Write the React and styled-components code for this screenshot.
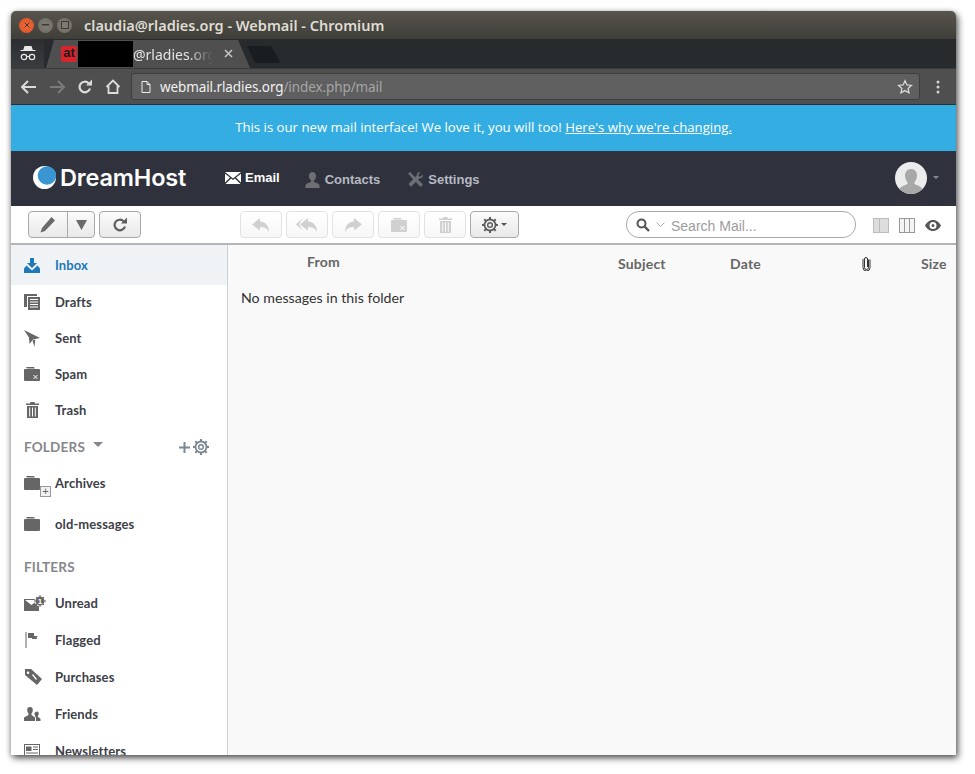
import styled, { createGlobalStyle } from 'styled-components'

const GlobalStyle = createGlobalStyle`
  html, body {
    margin: 0;
    padding: 0;
    background: #fff;
  }
  body {
    height: 774px;
    overflow: hidden;
    font-family: "Lato", "Liberation Sans", sans-serif;
  }
`

const Page = styled.div`
  padding: 11px 0 0 11px;
  height: 763px;
  box-sizing: border-box;
`
const Window = styled.div`
  width: 945px;
  height: 744px;
  display: flex;
  flex-direction: column;
  overflow: hidden;
  border-radius: 5px 5px 0 0;
  box-shadow: 2px 3px 7px rgba(0, 0, 0, 0.65), -1px 1px 5px rgba(0, 0, 0, 0.2);
  background: #fff;
`
const TitleBar = styled.div`
  height: 28px;
  flex: none;
  display: flex;
  align-items: center;
  padding-left: 8px;
  background: linear-gradient(#57554d, #3f3e39);
`
const Light = styled.span`
  width: 15px;
  height: 15px;
  border-radius: 50%;
  margin-right: 4px;
  flex: none;
  display: flex;
  align-items: center;
  justify-content: center;
  background: ${(p) => (p.$close ? 'radial-gradient(#ee6a3a, #dc4f24)' : 'radial-gradient(#807e75, #6c6a62)')};
  color: #3b3a35;
`
const WindowTitle = styled.div`
  margin-left: 8px;
  font-family: "Noto Sans", sans-serif;
  font-weight: 600;
  font-size: 14.5px;
  letter-spacing: 0;
  color: #dedcd3;
  white-space: nowrap;
`
const TabRow = styled.div`
  height: 29px;
  flex: none;
  display: flex;
  align-items: flex-end;
  background: #272b2e;
`
const Incognito = styled.div`
  width: 33px;
  height: 29px;
  flex: none;
  display: flex;
  align-items: center;
  justify-content: center;
  background: linear-gradient(#2b2f32, #3a3c3e);
`
const Tab = styled.div`
  width: 204px;
  height: 28px;
  margin-left: 2px;
  flex: none;
  display: flex;
  align-items: center;
  padding-left: 15px;
  box-sizing: border-box;
  background: #4f4f4f;
  clip-path: polygon(0 100%, 8px 0, 192px 0, 204px 100%);
`
const Favicon = styled.span`
  width: 16px;
  height: 16px;
  flex: none;
  border-radius: 2px;
  background: #d8242c;
  color: #1b1b1b;
  font: bold 13px/14px "Liberation Sans", sans-serif;
  text-align: center;
`
const Redacted = styled.span`
  width: 55px;
  height: 26px;
  margin-left: 1px;
  flex: none;
  background: #000;
`
const TabText = styled.span`
  width: 82px;
  flex: none;
  font-family: "Noto Sans", sans-serif;
  font-size: 14px;
  color: #e4e4e4;
  white-space: nowrap;
  overflow: hidden;
  -webkit-mask-image: linear-gradient(90deg, #000 68%, rgba(0, 0, 0, 0.35) 86%, transparent 98%);
  mask-image: linear-gradient(90deg, #000 68%, rgba(0, 0, 0, 0.35) 86%, transparent 98%);
`
const TabClose = styled.span`
  margin-left: 9px;
  margin-top: -1px;
  display: flex;
  color: #c6c6c6;
`
const NewTab = styled.span`
  width: 34px;
  height: 17px;
  margin: 0 0 5px -3px;
  flex: none;
  background: #1a1d1f;
  clip-path: polygon(0 0, 24px 0, 34px 100%, 8px 100%);
`
const AddressRow = styled.div`
  height: 37px;
  flex: none;
  display: flex;
  align-items: center;
  box-sizing: border-box;
  padding: 0 0 0 4px;
  background: #4f4f4f;
  border-top: 1px solid #3b3b3b;
  border-bottom: 1px solid #2f2f2f;
`
const NavIcon = styled.span`
  width: 28px;
  flex: none;
  display: flex;
  justify-content: center;
  color: ${(p) => (p.$off ? '#7b7b7b' : '#dcdcdc')};
`
const Omnibox = styled.div`
  width: 789px;
  height: 27px;
  margin-left: 4px;
  box-sizing: border-box;
  flex: none;
  display: flex;
  align-items: center;
  padding: 0 6px 0 9px;
  background: #5f5f5f;
  border: 1px solid #3e3e3e;
  border-radius: 3px;
`
const Url = styled.span`
  margin-left: 9px;
  font-family: "Noto Sans", sans-serif;
  font-size: 13.5px;
  letter-spacing: -0.1px;
  color: #a5a5a5;
  flex: 1;
  white-space: nowrap;
`
const UrlHost = styled.span`
  color: #f0f0f0;
`
const Dots = styled.span`
  margin-left: 16px;
  display: flex;
  color: #d4d4d4;
`
const Banner = styled.div`
  height: 46px;
  flex: none;
  display: flex;
  align-items: center;
  justify-content: center;
  box-sizing: border-box;
  padding-bottom: 2px;
  background: #34ade3;
  color: #fff;
  font-family: "Open Sans", sans-serif;
  font-size: 13.2px;
  white-space: pre;
  a {
    color: #fff;
    text-decoration: underline;
  }
`
const TopNav = styled.div`
  height: 55px;
  flex: none;
  display: flex;
  align-items: center;
  box-sizing: border-box;
  padding: 0 17px 2px 22px;
  background: #2f323c;
`
const Logo = styled.div`
  width: 192px;
  flex: none;
  display: flex;
  align-items: center;
  gap: 4px;
  font-family: "Inter", sans-serif;
  font-weight: 600;
  font-size: 23.5px;
  letter-spacing: -0.15px;
  color: #fff;
`
const NavLink = styled.a`
  display: flex;
  align-items: center;
  gap: ${(p) => p.$iconGap || 5}px;
  margin-right: ${(p) => p.$gap}px;
  font: bold 13px "Liberation Sans", sans-serif;
  color: ${(p) => (p.$active ? '#fff' : '#b6bac3')};
  padding-top: ${(p) => (p.$active ? 0 : 4)}px;
`
const SettingsGlyph = styled.span`
  display: flex;
  color: #6d6f74;
`
const Avatar = styled.div`
  margin-left: auto;
  display: flex;
  align-items: center;
  gap: 6px;
`
const AvatarCircle = styled.span`
  width: 32px;
  height: 32px;
  border-radius: 50%;
  overflow: hidden;
  display: flex;
`
const Caret = styled.span`
  display: block;
  width: 0;
  height: 0;
  border-left: ${(p) => p.$size || 3}px solid transparent;
  border-right: ${(p) => p.$size || 3}px solid transparent;
  border-top: ${(p) => p.$size || 3}px solid ${(p) => p.$color || '#8a8d95'};
`
const Toolbar = styled.div`
  height: 39px;
  flex: none;
  display: flex;
  align-items: flex-start;
  box-sizing: border-box;
  padding: 5px 0 0 17px;
  background: #fff;
  border-bottom: 2px solid #b5b5b5;
`
const ToolButton = styled.button`
  width: ${(p) => p.$w || 42}px;
  height: 27px;
  margin-left: ${(p) => p.$ml || 4}px;
  padding: 0;
  flex: none;
  display: flex;
  align-items: center;
  justify-content: center;
  gap: 3px;
  box-sizing: border-box;
  border: 1px solid ${(p) => (p.$off ? '#e2e2e2' : '#a9a9a9')};
  border-radius: 4px;
  background: ${(p) => (p.$off ? 'linear-gradient(#fff, #f7f7f7)' : 'linear-gradient(#fbfbfb, #e9e9e9)')};
  color: ${(p) => (p.$off ? '#d0d0d0' : '#5e5e5e')};
`
const SplitButton = styled.div`
  width: 67px;
  height: 27px;
  flex: none;
  display: flex;
  box-sizing: border-box;
  border: 1px solid #a9a9a9;
  border-radius: 4px;
  background: linear-gradient(#fbfbfb, #e9e9e9);
  color: #6a6a6a;
`
const SplitPart = styled.span`
  width: ${(p) => p.$w}px;
  flex: none;
  display: flex;
  align-items: center;
  justify-content: center;
  box-sizing: border-box;
  border-left: ${(p) => (p.$divide ? '1px solid #a9a9a9' : 'none')};
`
const SearchBox = styled.div`
  width: 230px;
  height: 27px;
  margin-left: 107px;
  flex: none;
  display: flex;
  align-items: center;
  gap: 6px;
  padding-left: 9px;
  box-sizing: border-box;
  border: 1px solid #a9a9a9;
  border-radius: 13px;
  color: #555;
`
const SearchText = styled.span`
  padding-top: 2px;
  font-family: "Liberation Sans", sans-serif;
  font-size: 14px;
  color: #9c9c9c;
`
const ViewIcons = styled.div`
  margin-left: 17px;
  height: 27px;
  padding-top: 1px;
  box-sizing: border-box;
  display: flex;
  align-items: center;
  gap: 10px;
  color: #555;
`
const Body = styled.div`
  flex: 1;
  min-height: 0;
  display: flex;
`
const Sidebar = styled.div`
  width: 217px;
  flex: none;
  box-sizing: border-box;
  border-right: 1px solid #d0d0d0;
  background: #fff;
  overflow: hidden;
`
const MenuRow = styled.div`
  height: ${(p) => p.$h || 36}px;
  margin-top: ${(p) => p.$mt || 0}px;
  display: flex;
  align-items: center;
  padding: 0 0 ${(p) => (p.$selected ? 0 : 2)}px 13px;
  box-sizing: border-box;
  background: ${(p) => (p.$selected ? '#eff3f6' : 'transparent')};
  color: ${(p) => (p.$selected ? '#1f78b8' : '#3d4048')};
  font-weight: 700;
  font-size: 13px;
  letter-spacing: 0.1px;
`
const MenuIcon = styled.span`
  width: 31px;
  height: 20px;
  flex: none;
  display: flex;
  align-items: center;
  box-sizing: border-box;
  padding-left: ${(p) => p.$pad || 0}px;
  color: ${(p) => (p.$selected ? '#1f78b8' : '#666')};
  position: relative;
`
const ExpandBadge = styled.span`
  position: absolute;
  left: 16px;
  top: 13px;
  width: 11px;
  height: 11px;
  box-sizing: border-box;
  border: 1px solid #999;
  background: #f2f2f2;
  color: #666;
  font: 11px/8px "Liberation Sans", sans-serif;
  text-align: center;
`
const SectionHead = styled.div`
  height: 36px;
  display: flex;
  align-items: center;
  margin-top: ${(p) => p.$mt || 0}px;
  padding: 0 18px 0 13px;
  color: #85878c;
  font-weight: 700;
  font-size: 13.5px;
  letter-spacing: 0.2px;
`
const SectionCaret = styled.span`
  display: flex;
  margin: -5px 0 0 8px;
`
const SectionTools = styled.span`
  margin-left: auto;
  display: flex;
  align-items: center;
  gap: 3px;
  color: #7c8791;
`
const Main = styled.div`
  flex: 1;
  min-width: 0;
  background: #f9f9f9;
`
const ListHead = styled.div`
  height: 37px;
  display: grid;
  grid-template-columns: 311px 112px 132px 59px auto;
  align-items: center;
  padding-left: 79px;
  color: #666;
  font-weight: 700;
  font-size: 14px;
  letter-spacing: 0.2px;
`
const FromCol = styled.span`
  margin-top: -5px;
`
const Empty = styled.div`
  padding: 7px 0 0 13px;
  color: #333;
  font-size: 14.2px;
`

// all the little drawings, kept in one place
const Svg = ({ w = 16, h = 16, box, children }) => (
  <svg width={w} height={h} viewBox={box || `0 0 ${w} ${h}`} fill="currentColor">{children}</svg>
)
const Back = () => <Svg w={16} h={14}><path d="M7 1 1 7l6 6M1.5 7H15" fill="none" stroke="currentColor" strokeWidth="2" /></Svg>
const Forward = () => <Svg w={16} h={14}><path d="M9 1l6 6-6 6M14.5 7H1" fill="none" stroke="currentColor" strokeWidth="2" /></Svg>
const Reload = () => (
  <Svg w={16} h={16}>
    <path d="M13 9.5A5.3 5.3 0 1 1 11.6 4.2" fill="none" stroke="currentColor" strokeWidth="2.2" />
    <path d="M9 6.5h6v-6z" />
  </Svg>
)
const Home = () => <Svg w={16} h={15}><path d="M1.5 8 8 1.5 14.500 8M3.500 7v7h9V7" fill="none" stroke="currentColor" strokeWidth="1.8" /></Svg>
const PageGlyph = () => <Svg w={10} h={12}><path d="M1 .5h5l3 3v8H1zM6 .5v3h3" fill="none" stroke="#eee" /></Svg>
const Star = () => <Svg w={16} h={16}><path d="m8 1.800 1.900 4.100 4.500.5-3.300 3 .9 4.400L8 11.600l-4 2.200.9-4.400-3.300-3 4.500-.5z" fill="none" stroke="#d8d8d8" strokeWidth="1.300" /></Svg>
const Spy = () => (
  <Svg w={18} h={17}>
    <path d="M5.500 1h7l1.300 4H16.500v1H1.500V5h2.700z" fill="#e8e8e8" />
    <circle cx="5" cy="12" r="2.700" fill="none" stroke="#e8e8e8" strokeWidth="1.200" />
    <circle cx="13" cy="12" r="2.700" fill="none" stroke="#e8e8e8" strokeWidth="1.200" />
    <path d="M7.700 11.500h2.600" stroke="#e8e8e8" />
  </Svg>
)
const Cross = ({ size = 9 }) => <Svg w={size} h={size} box="0 0 9 9"><path d="m1 1 7 7M8 1 1 8" stroke="currentColor" strokeWidth="1.500" fill="none" /></Svg>
const Mail = () => <Svg w={16} h={12}><path d="M0 0h16L8 6.500zM0 1.800v8.700l5-5zM16 1.800v8.700l-5-5zM6 6.500l2 1.600 2-1.600 5.500 5.500H.5z" /></Svg>
const Person = ({ color = '#666', w = 15, h = 17 }) => (
  <Svg w={w} h={h} box="0 0 15 17"><path d="M7.500 0c2.500 0 3.800 1.800 3.800 4.200 0 2-1 4-2.300 4.800v1.500c2 .8 6 1.300 6 4.500v2H0v-2c0-3.200 4-3.700 6-4.500V9C4.700 8.200 3.700 6.200 3.700 4.200 3.700 1.800 5 0 7.500 0z" fill={color} /></Svg>
)
const Tools = () => (
  <Svg w={17} h={17}>
    <path d="M1 2.500 3 1l5.500 5.500-2 2zM16 13.500 13.500 16 8.800 11l2.300-2.300z" />
    <path d="M15.500 3.500 13 6l-2-2 2.500-2.500C11.500.7 9.500 2 9.800 4.500L1.500 13l2.500 2.800L12.500 7.200c2.500.4 4-1.700 3-3.700z" />
  </Svg>
)
const Moon = () => (
  <svg width="23" height="23" viewBox="0 0 23 23">
    <circle cx="11.500" cy="11.500" r="11.500" fill="#fff" />
    <circle cx="14" cy="9.500" r="9.300" fill="#3a96d0" />
  </svg>
)
const Pencil = () => <Svg w={16} h={17}><path d="M11.500 1 15 4.500 5 15l-4.500 1.500L2 12z" /></Svg>
const TriangleDown = () => <Svg w={11} h={10}><path d="M0 0h11L5.500 10z" /></Svg>
const Reply = () => <Svg w={20} h={16}><path d="M9 1 1 7.500 9 13.500V10c4 0 7 1 9 5 0-6-3-10-9-10.500z" /></Svg>
const ReplyAll = () => <Svg w={22} h={16}><path d="M7 1 0 7.500 7 13.500l-4-6zM12 1 4 7.500l8 6V10c4 0 7 1 9 5 0-6-3-10-9-10.500z" /></Svg>
const Forwarded = () => <Svg w={20} h={16}><path d="M11 1l8 6.500-8 6V10c-4 0-7 1-9 5 0-6 3-10 9-10.500z" /></Svg>
const Folder = ({ spam }) => (
  <Svg w={16} h={14}>
    <path d="M2 0h8l1 1.500H3zM1 2h14a1 1 0 0 1 1 1v10a1 1 0 0 1-1 1H1a1 1 0 0 1-1-1V3a1 1 0 0 1 1-1z" />
    {spam && <path d="m9.500 8 4 4M13.500 8l-4 4" stroke="#fff" strokeWidth="1" />}
  </Svg>
)
const Trash = () => (
  <Svg w={13} h={16}>
    <path d="M4.500 0h4l.5 1.500h4V3H0V1.500h4zM1 4h11v12H1zM3.200 5.500v9h1v-9zM6 5.500v9h1v-9zM8.800 5.500v9h1v-9z" fillRule="evenodd" />
  </Svg>
)
const Gear = ({ size = 16 }) => (
  <Svg w={size} h={size} box="0 0 16 16">
    <circle cx="8" cy="8" r="5.500" fill="none" stroke="currentColor" strokeWidth="1.800" />
    <circle cx="8" cy="8" r="2.300" fill="none" stroke="currentColor" strokeWidth="1.500" />
    <path d="M8 0v3M8 13v3M0 8h3M13 8h3M2.300 2.300l2.200 2.200M11.500 11.500l2.200 2.200M13.700 2.300l-2.200 2.200M4.500 11.500l-2.200 2.200" stroke="currentColor" strokeWidth="2" />
  </Svg>
)
const Magnifier = () => <Svg w={14} h={14}><circle cx="5.500" cy="5.500" r="4" fill="none" stroke="currentColor" strokeWidth="2" /><path d="m8.500 8.500 4.500 4.500" stroke="currentColor" strokeWidth="2.400" /></Svg>
const Chevron = () => <Svg w={9} h={6}><path d="m.5.500 4 4 4-4" fill="none" stroke="#aaa" /></Svg>
const PaneOne = () => (
  <svg width="16" height="15" viewBox="0 0 16 15"><rect x=".5" y=".5" width="15" height="14" fill="#ddd" stroke="#bbb" /><path d="M6.500 0v15" stroke="#bbb" /></svg>
)
const PaneThree = () => (
  <svg width="16" height="15" viewBox="0 0 16 15"><rect x=".5" y=".5" width="15" height="14" fill="#f4f4f4" stroke="#999" /><path d="M5.500 0v15M10.500 0v15" stroke="#999" /></svg>
)
const Eye = () => <Svg w={16} h={11}><path d="M8 0c3.500 0 6.500 2.500 8 5.500C14.500 8.500 11.500 11 8 11S1.500 8.500 0 5.500C1.500 2.500 4.500 0 8 0zm0 2a3.500 3.500 0 1 0 0 7 3.500 3.500 0 0 0 0-7zm0 2a1.500 1.500 0 1 1 0 3 1.500 1.500 0 0 1 0-3z" fillRule="evenodd" /></Svg>
const Clip = () => <Svg w={9} h={15}><path d="M6.500 3.500v8a2 2 0 0 1-4 0V3a1.500 1.500 0 0 1 3 0v8" fill="none" stroke="#333" /><path d="M8 3.500v8a3.500 3.500 0 0 1-7 0V3" fill="none" stroke="#333" /></Svg>
const Inbox = () => (
  <Svg w={16} h={15}>
    <path d="M6 0h4v5h3L8 10 3 5h3z" />
    <path d="M2.500 7.500 0 10.500V15h16v-4.500l-2.500-3-1 1L8 12.500 3.500 8.500z" />
  </Svg>
)
const Drafts = () => (
  <Svg w={16} h={16}>
    <path d="M0 0h13v2H3v11H0z" />
    <path d="M4 3h12v13H4zM6 5v1h8V5zM6 7.500v1h8v-1zM6 10v1h8v-1zM6 12.500v1h8v-1z" fillRule="evenodd" />
  </Svg>
)
const Sent = () => <Svg w={16} h={17}><path d="M0 0 16 8 9 9.500 5.500 14 5 7.500z" /><path d="M8.500 10.500 10.500 17l.8-7.500z" /></Svg>
const Plus = () => <Svg w={11} h={11}><path d="M5.500 0v11M0 5.500h11" stroke="currentColor" strokeWidth="2" /></Svg>
const Unread = () => (
  <Svg w={22} h={16}>
    <path d="M0 4h15v12H0zM1 5l6.500 5L14 5z" fillRule="evenodd" />
    <circle cx="16" cy="6" r="5" stroke="#fff" />
    <path d="M16 0v12M10 6h12M12 2l8 8M20 2l-8 8" stroke="currentColor" />
    <text x="16" y="9" fontSize="8" fontWeight="700" textAnchor="middle" fill="#fff" fontFamily="Liberation Sans">1</text>
  </Svg>
)
const Flag = () => <Svg w={14} h={16}><path d="M2.500 0v16h-1V0zM4 1h6v3h4l-1.500 1.500L13 7H8V6H4z" /></Svg>
const Tag = () => (
  <Svg w={18} h={16}>
    <path d="M1 0h6l11 10-5 6L1 6zM4 2.500a1.300 1.300 0 1 0 0 2.600 1.300 1.300 0 0 0 0-2.600zM8 6l4 5 1-1-4-5z" fillRule="evenodd" />
  </Svg>
)
const Friends = () => (
  <Svg w={17} h={14}>
    <path d="M6 0c2 0 2.800 1.300 2.800 3S8 6 7.500 6.500v1.500l3.500 2.500V14H0v-3.500L4.500 8V6.500C4 6 3.200 4.700 3.200 3S4 0 6 0z" />
    <path d="M13 4.500c1.200 0 1.800 1 1.800 2s-.5 2-1 2.300v1l2.700 2V14H12v-3.500l-.8-.7v-1c-.3-.3-.7-1.300-.7-2.300s1.300-2 2.500-2z" />
  </Svg>
)
const News = () => (
  <Svg w={16} h={14}>
    <path d="M0 0h16v14H0zM1 1v12h14V1zM2 2.500h5.500V7H2zM9 2.500h5v1H9zM9 5h5v1H9zM2 8.500h12v1H2zM2 11h12v1H2z" fillRule="evenodd" />
  </Svg>
)

function App() {
  return (
    <Page>
      <GlobalStyle />
      <Window>
        <TitleBar>
          <Light $close><Cross size={6} /></Light>
          <Light><Svg w={7} h={2}><path d="M0 0h7v1.500H0z" /></Svg></Light>
          <Light><Svg w={8} h={8}><path d="M.5.500h7v7h-7z" fill="none" stroke="currentColor" /></Svg></Light>
          <WindowTitle>claudia@rladies.org - Webmail - Chromium</WindowTitle>
        </TitleBar>
        <TabRow>
          <Incognito><Spy /></Incognito>
          <Tab>
            <Favicon>at</Favicon>
            <Redacted />
            <TabText>@rladies.org</TabText>
            <TabClose><Cross /></TabClose>
          </Tab>
          <NewTab />
        </TabRow>
        <AddressRow>
          <NavIcon><Back /></NavIcon>
          <NavIcon $off><Forward /></NavIcon>
          <NavIcon><Reload /></NavIcon>
          <NavIcon><Home /></NavIcon>
          <Omnibox>
            <PageGlyph />
            <Url><UrlHost>webmail.rladies.org</UrlHost>/index.php/mail</Url>
            <Star />
          </Omnibox>
          <Dots>
            <Svg w={4} h={14}><circle cx="2" cy="2" r="1.500" /><circle cx="2" cy="7" r="1.500" /><circle cx="2" cy="12" r="1.500" /></Svg>
          </Dots>
        </AddressRow>
        <Banner>
          This is our new mail interface! We love it, you will too! <a>Here's why we're changing.</a>
        </Banner>
        <TopNav>
          <Logo><Moon />DreamHost</Logo>
          <NavLink $active $iconGap={4} $gap={25}><Mail />Email</NavLink>
          <NavLink $gap={27}><Person w={15} h={16} color="#6d6f74" />Contacts</NavLink>
          <NavLink $iconGap={4} $gap={0}><SettingsGlyph><Tools /></SettingsGlyph>Settings</NavLink>
          <Avatar>
            <AvatarCircle>
              <svg width="32" height="32" viewBox="0 0 32 32">
                <rect width="32" height="32" fill="#ececec" />
                <path d="M16 7c4 0 6 3 6 6.500 0 2.500-1 5-2.500 6.500v2c2.500 1.500 7 2 8.500 6v4H4v-4c1.500-4 6-4.500 8.500-6v-2C11 18.500 10 16 10 13.500 10 10 12 7 16 7z" fill="#a8a8a8" />
              </svg>
            </AvatarCircle>
            <Caret />
          </Avatar>
        </TopNav>
        <Toolbar>
          <SplitButton>
            <SplitPart $w={38}><Pencil /></SplitPart>
            <SplitPart $w={27} $divide><TriangleDown /></SplitPart>
          </SplitButton>
          <ToolButton><Reload /></ToolButton>
          <ToolButton $off $ml={99}><Reply /></ToolButton>
          <ToolButton $off><ReplyAll /></ToolButton>
          <ToolButton $off><Forwarded /></ToolButton>
          <ToolButton $off><Folder spam /></ToolButton>
          <ToolButton $off><Trash /></ToolButton>
          <ToolButton $w={49}><Gear /><Caret $color="#555" /></ToolButton>
          <SearchBox>
            <Magnifier />
            <Chevron />
            <SearchText>Search Mail...</SearchText>
          </SearchBox>
          <ViewIcons>
            <PaneOne />
            <PaneThree />
            <Eye />
          </ViewIcons>
        </Toolbar>
        <Body>
          <Sidebar>
            <MenuRow $selected $h={40}><MenuIcon $selected><Inbox /></MenuIcon>Inbox</MenuRow>
            <MenuRow><MenuIcon><Drafts /></MenuIcon>Drafts</MenuRow>
            <MenuRow><MenuIcon><Sent /></MenuIcon>Sent</MenuRow>
            <MenuRow><MenuIcon><Folder spam /></MenuIcon>Spam</MenuRow>
            <MenuRow><MenuIcon $pad={2}><Trash /></MenuIcon>Trash</MenuRow>
            <SectionHead>
              FOLDERS
              <SectionCaret><Caret $size={5} $color="#85878c" /></SectionCaret>
              <SectionTools><Plus /><Gear size={16} /></SectionTools>
            </SectionHead>
            <MenuRow $mt={1}>
              <MenuIcon><Folder /><ExpandBadge>+</ExpandBadge></MenuIcon>Archives
            </MenuRow>
            <MenuRow $h={41} $mt={2}><MenuIcon><Folder /></MenuIcon>old-messages</MenuRow>
            <SectionHead $mt={4}>FILTERS</SectionHead>
            <MenuRow $h={37}><MenuIcon><Unread /></MenuIcon>Unread</MenuRow>
            <MenuRow $h={37}><MenuIcon><Flag /></MenuIcon>Flagged</MenuRow>
            <MenuRow $h={37}><MenuIcon><Tag /></MenuIcon>Purchases</MenuRow>
            <MenuRow $h={37}><MenuIcon><Friends /></MenuIcon>Friends</MenuRow>
            <MenuRow $h={37}><MenuIcon><News /></MenuIcon>Newsletters</MenuRow>
          </Sidebar>
          <Main>
            <ListHead>
              <FromCol>From</FromCol>
              <span>Subject</span>
              <span>Date</span>
              <Clip />
              <span>Size</span>
            </ListHead>
            <Empty>No messages in this folder</Empty>
          </Main>
        </Body>
      </Window>
    </Page>
  )
}

export default App
